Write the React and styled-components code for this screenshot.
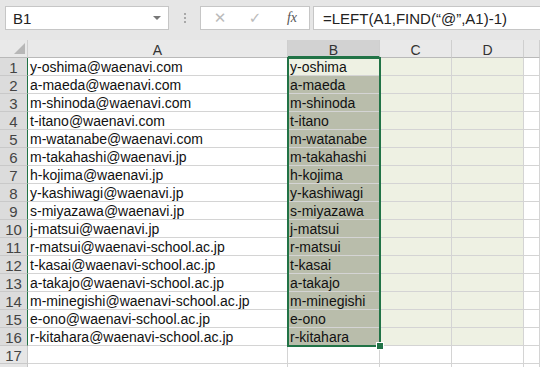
import React from "react";
import styled, { createGlobalStyle } from "styled-components";

const GREEN = "#217346";
const GRID = "#D4D4D4";

const GlobalStyle = createGlobalStyle`
  html, body { margin: 0; padding: 0; background: #fff; }
  body { font-family: "Liberation Sans", sans-serif; }
`;

const Page = styled.div`
  width: 540px;
  height: 367px;
  overflow: hidden;
  background: #e6e6e6;
  display: flex;
  flex-direction: column;
`;

const Toolbar = styled.div`
  height: 40px;
  flex: none;
  box-sizing: border-box;
  padding: 6px 0 0 5px;
  display: flex;
  align-items: flex-start;
`;

const Box = styled.div`
  height: 24px;
  box-sizing: border-box;
  background: #fff;
  border: 1px solid #c6c6c6;
  display: flex;
  align-items: center;
`;

const NameBox = styled(Box)`
  width: 164px;
  padding: 0 7px 0 7px;
  justify-content: space-between;
  font-size: 15px;
  color: #222;
`;

const Caret = styled.span`
  width: 0;
  height: 0;
  border-left: 4px solid transparent;
  border-right: 4px solid transparent;
  border-top: 4px solid #777;
`;

const Dots = styled.div`
  width: 31px;
  height: 24px;
  display: flex;
  flex-direction: column;
  align-items: center;
  justify-content: center;
  gap: 2px;
  & > span {
    width: 2px;
    height: 2px;
    background: #a8a8a8;
  }
`;

const FnBox = styled(Box)`
  width: 110px;
  padding-left: 8px;
`;

const FnIcon = styled.span`
  width: ${(p) => p.$w}px;
  display: flex;
  justify-content: center;
  color: ${(p) => p.$color || "#bbb"};
  font-family: ${(p) => (p.$serif ? '"Liberation Serif", serif' : '"DejaVu Sans", sans-serif')};
  font-style: ${(p) => (p.$serif ? "italic" : "normal")};
  font-size: ${(p) => p.$size || 14}px;
`;

const FormulaBox = styled(Box)`
  flex: 1;
  margin-left: 3px;
  border-right: none;
  padding-left: 9px;
  font-size: 15px;
  color: #222;
`;

const Sheet = styled.div`
  position: relative;
  flex: none;
  display: grid;
  grid-template-columns: 28px 260px 92px 72px 72px 1fr;
  grid-template-rows: repeat(19, 18px);
  background: #fff;
`;

const Cell = styled.div`
  box-sizing: border-box;
  border-right: 1px solid ${GRID};
  border-bottom: 1px solid ${GRID};
  background: ${(p) => p.$bg || "#fff"};
  font-size: 14px;
  line-height: 16px;
  color: #111;
  padding-left: 2px;
  white-space: nowrap;
  overflow: visible;
  display: flex;
  align-items: flex-end;
`;

const ColHead = styled.div`
  box-sizing: border-box;
  background: ${(p) => (p.$sel ? "#d2d2d2" : "#e9e9e9")};
  border-right: 1px solid #cfcfcf;
  border-bottom: ${(p) => (p.$sel ? `2px solid ${GREEN}` : "1px solid #b9b9b9")};
  display: flex;
  align-items: center;
  justify-content: center;
  font-size: 14px;
  color: #333;
  padding-top: ${(p) => (p.$sel ? 3 : 2)}px;
`;

const Corner = styled(ColHead)`
  position: relative;
  &::after {
    content: "";
    position: absolute;
    right: 2px;
    bottom: 3px;
    width: 0;
    height: 0;
    border-left: 11px solid transparent;
    border-bottom: 11px solid #b7b7b7;
  }
`;

const RowHead = styled.div`
  box-sizing: border-box;
  background: ${(p) => (p.$sel ? "#dcdcdc" : "#e6e6e6")};
  border-right: ${(p) => (p.$sel ? `1px solid ${GREEN}` : "1px solid #c6c6c6")};
  border-bottom: 1px solid #c9c9c9;
  display: flex;
  align-items: center;
  justify-content: center;
  font-size: 15px;
  color: #444;
  padding-top: 1px;
`;

const Selection = styled.div`
  position: absolute;
  left: 287px;
  top: 17px;
  width: 94px;
  height: 290px;
  box-sizing: border-box;
  border: 2px solid ${GREEN};
  pointer-events: none;
`;

const Handle = styled.div`
  position: absolute;
  left: 377px;
  top: 303px;
  width: 6px;
  height: 6px;
  background: ${GREEN};
  box-shadow: 0 0 0 1px #fff;
`;

const emails = [
  "y-oshima@waenavi.com",
  "a-maeda@waenavi.com",
  "m-shinoda@waenavi.com",
  "t-itano@waenavi.com",
  "m-watanabe@waenavi.com",
  "m-takahashi@waenavi.jp",
  "h-kojima@waenavi.jp",
  "y-kashiwagi@waenavi.jp",
  "s-miyazawa@waenavi.jp",
  "j-matsui@waenavi.jp",
  "r-matsui@waenavi-school.ac.jp",
  "t-kasai@waenavi-school.ac.jp",
  "a-takajo@waenavi-school.ac.jp",
  "m-minegishi@waenavi-school.ac.jp",
  "e-ono@waenavi-school.ac.jp",
  "r-kitahara@waenavi-school.ac.jp",
];

const LIGHT = "#eef1e3";
const DARK = "#b9bdab";

export default function App() {
  return (
    <>
      <GlobalStyle />
      <Page>
        <Toolbar>
          <NameBox>
            B1
            <Caret />
          </NameBox>
          <Dots>
            <span />
            <span />
            <span />
          </Dots>
          <FnBox>
            <FnIcon $w={22} $size={15}>✕</FnIcon>
            <FnIcon $w={48} $size={15}>✓</FnIcon>
            <FnIcon $w={26} $serif $color="#555" $size={14}>fx</FnIcon>
          </FnBox>
          <FormulaBox>=LEFT(A1,FIND(“@”,A1)-1)</FormulaBox>
        </Toolbar>
        <Sheet>
          <Corner />
          <ColHead>A</ColHead>
          <ColHead $sel>B</ColHead>
          <ColHead>C</ColHead>
          <ColHead>D</ColHead>
          <ColHead />
          {emails.map((e, i) => (
            <React.Fragment key={e}>
              <RowHead $sel>{i + 1}</RowHead>
              <Cell>{e}</Cell>
              <Cell $bg={i === 0 ? LIGHT : DARK}>{e.split("@")[0]}</Cell>
              <Cell $bg={LIGHT} />
              <Cell $bg={LIGHT} />
              <Cell />
            </React.Fragment>
          ))}
          {["17", ""].map((n, i) => (
            <React.Fragment key={i}>
              <RowHead>{n}</RowHead>
              <Cell />
              <Cell />
              <Cell />
              <Cell />
              <Cell />
            </React.Fragment>
          ))}
          <Selection />
          <Handle />
        </Sheet>
      </Page>
    </>
  );
}
